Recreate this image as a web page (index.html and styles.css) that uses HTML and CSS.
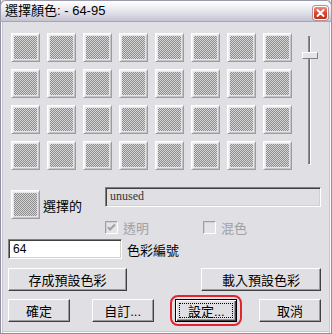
FILE: index.html
```html
<!DOCTYPE html>
<html>
<head>
<meta charset="utf-8">
<link rel="stylesheet" href="styles.css">
</head>
<body>
<div class="window">
  <div class="titlebar">
    <span class="title">選擇顏色: - 64-95</span>
    <span class="close">
      <svg width="15" height="14" viewBox="0 0 15 14"><path d="M4 3.5 L11 10.5 M11 3.5 L4 10.5" stroke="#fff" stroke-width="2.2" stroke-linecap="round"/></svg>
    </span>
  </div>
  <div class="content">
    <div class="top">
      <div class="grid">
        <div class="sw"></div><div class="sw"></div><div class="sw"></div><div class="sw"></div><div class="sw"></div><div class="sw"></div><div class="sw"></div><div class="sw"></div>
        <div class="sw"></div><div class="sw"></div><div class="sw"></div><div class="sw"></div><div class="sw"></div><div class="sw"></div><div class="sw"></div><div class="sw"></div>
        <div class="sw"></div><div class="sw"></div><div class="sw"></div><div class="sw"></div><div class="sw"></div><div class="sw"></div><div class="sw"></div><div class="sw"></div>
        <div class="sw"></div><div class="sw"></div><div class="sw"></div><div class="sw"></div><div class="sw"></div><div class="sw"></div><div class="sw"></div><div class="sw"></div>
      </div>
      <div class="slider">
        <div class="track"></div>
        <div class="thumb"></div>
      </div>
    </div>
    <div class="sel-row">
      <div class="sel-left">
        <div class="sw"></div>
        <span class="label">選擇的</span>
      </div>
      <div class="sel-right">
        <div class="field disabled">unused</div>
        <div class="checks">
          <div class="chk first">
            <span class="box"><svg width="11" height="11" viewBox="0 0 11 11"><path d="M2 5 L4 7.5 L9 2.5" stroke="#a0a0a0" stroke-width="2" fill="none"/></svg></span>
            <span class="chk-label">透明</span>
          </div>
          <div class="chk">
            <span class="box"></span>
            <span class="chk-label">混色</span>
          </div>
        </div>
      </div>
    </div>
    <div class="num-row">
      <div class="field white">64</div>
      <span class="label">色彩編號</span>
    </div>
    <div class="btn-row">
      <div class="btn wide1">存成預設色彩</div>
      <div class="btn wide2">載入預設色彩</div>
    </div>
    <div class="btn-row row2">
      <div class="btn small">確定</div>
      <div class="btn small">自訂...</div>
      <div class="btn small default"><span class="focus">設定...</span><span class="ring"></span></div>
      <div class="btn small">取消</div>
    </div>
  </div>
</div>
</body>
</html>
```
FILE: styles.css
```css
* { box-sizing: border-box; }
html, body { margin: 0; padding: 0; }
body {
  width: 332px;
  height: 334px;
  overflow: hidden;
  font-family: "Liberation Sans", "Noto Sans CJK TC", sans-serif;
  font-size: 12px;
  color: #000;
}
.window {
  width: 332px;
  height: 334px;
  background: #e0dfe3;
  border: 1px solid #8f8fa0;
  border-top: 0;
  box-shadow: inset 1px 0 #fafafc, inset 2px 0 #c8c8d4, inset -1px 0 #fafafc, inset -2px 0 #c8c8d4, inset 0 -1px #fafafc, inset 0 -2px #c8c8d4;
  display: flex;
  flex-direction: column;
}
.titlebar {
  height: 22px;
  margin: 0 -1px;
  background: linear-gradient(#ffffff 0%, #f0f0f5 30%, #d9d9e4 70%, #c3c3d0 100%);
  border-radius: 6px 6px 0 0;
  border: 1px solid #9a9aab;
  border-bottom: 1px solid #a6a6b6;
  display: flex;
  align-items: center;
  justify-content: space-between;
  padding: 0 3px 0 4px;
}
.title {
  font-size: 13px;
  color: #000;
  line-height: 14px;
}
.close {
  width: 15px;
  height: 14px;
  border-radius: 3px;
  background: linear-gradient(#f08a7c, #d6422c 55%, #c42e1c);
  border: 1px solid #fff;
  box-shadow: 0 0 0 1px #b0909a;
  display: flex;
  align-items: center;
  justify-content: center;
  margin-top: 3px;
}
.close svg { display: block; }
.content {
  flex: 1;
  padding: 10px 10px 0 7px;
  display: flex;
  flex-direction: column;
}
.top {
  display: flex;
  align-items: flex-start;
  padding-left: 3px;
}
.grid {
  display: grid;
  grid-template-columns: repeat(8, 29px);
  grid-auto-rows: 29px;
  gap: 7px;
  margin-top: 1px;
}
.sw {
  width: 29px;
  height: 29px;
  border-top: 1px solid #ffffff;
  border-left: 1px solid #ffffff;
  border-right: 1px solid #9c9ca2;
  border-bottom: 1px solid #9c9ca2;
  box-shadow: inset 1px 1px #f4f4f6, inset -1px -1px #c4c4c8;
  padding: 2px;
  background:
    conic-gradient(#8c8c8c 25%, #d6d6d6 0 50%, #8c8c8c 0 75%, #d6d6d6 0) content-box 0 0 / 2px 2px,
    #e6e6ea;
}
.slider {
  position: relative;
  width: 16px;
  height: 131px;
  margin-left: 10px;
  margin-top: 4px;
}
.track {
  width: 3px;
  height: 129px;
  margin-left: 6px;
  border-left: 1px solid #8c8c90;
  border-top: 1px solid #8c8c90;
  background: #6e6e72;
  border-right: 1px solid #ffffff;
  border-bottom: 1px solid #ffffff;
}
.thumb {
  position: absolute;
  left: 0;
  top: 16px;
  width: 16px;
  height: 7px;
  background: #e4e4e8;
  border-top: 1px solid #ffffff;
  border-left: 1px solid #ffffff;
  border-right: 1px solid #808084;
  border-bottom: 1px solid #808084;
}
.sel-row {
  display: flex;
  margin-top: 17px;
}
.sel-left {
  width: 97px;
  display: flex;
  align-items: center;
  padding-left: 3px;
  height: 33px;
}
.sel-left .sw { margin-top: 2px; }
.label {
  font-size: 13px;
  margin-left: 3px;
  margin-top: 3px;
}
.sel-right {
  display: flex;
  flex-direction: column;
  flex: 1;
}
.field {
  height: 20px;
  border-top: 1px solid #808080;
  border-left: 1px solid #808080;
  border-right: 1px solid #ffffff;
  border-bottom: 1px solid #ffffff;
  box-shadow: inset 1px 1px #404040, inset -1px -1px #d4d0c8;
  padding: 3px 0 0 4px;
  line-height: 13px;
}
.field.disabled {
  background: #e0dfe3;
  font-family: "Liberation Serif", "Noto Sans CJK TC", serif;
  font-size: 12px;
  color: #333;
  padding-top: 2px;
}
.checks {
  display: flex;
  margin-top: 14px;
}
.chk {
  display: flex;
  align-items: center;
  height: 13px;
}
.chk.first { width: 98px; }
.box {
  width: 13px;
  height: 13px;
  border-top: 1px solid #a0a0a0;
  border-left: 1px solid #a0a0a0;
  border-right: 1px solid #ffffff;
  border-bottom: 1px solid #ffffff;
  box-shadow: inset 1px 1px #d0d0d4;
  background: #e4e4e8;
  display: flex;
  align-items: center;
  justify-content: center;
}
.box svg { display: block; }
.chk-label {
  font-size: 13px;
  color: #a0a0a4;
  margin-left: 5px;
}
.num-row {
  display: flex;
  align-items: center;
  margin-top: 5px;
}
.field.white {
  width: 114px;
  background: #ffffff;
  font-size: 12px;
}
.num-row .label { margin-left: 5px; margin-top: 0; }
.btn-row {
  display: flex;
  justify-content: space-between;
  margin-top: 9px;
}
.row2 { margin-top: 8px; }
.btn {
  height: 23px;
  background: #e0dfe3;
  border-top: 1px solid #ffffff;
  border-left: 1px solid #ffffff;
  border-right: 1px solid #404040;
  border-bottom: 1px solid #404040;
  box-shadow: inset -1px -1px #9c9ca0;
  display: flex;
  align-items: center;
  justify-content: center;
  font-size: 13px;
  padding-bottom: 1px;
}
.wide1 { width: 119px; }
.wide2 { width: 120px; }
.small { width: 62px; }
.default {
  position: relative;
  border: 1px solid #000;
  box-shadow: inset 1px 1px #ffffff, inset -1px -1px #404040, inset -2px -2px #9c9ca0;
}
.focus {
  display: flex;
  align-items: center;
  justify-content: center;
  width: 54px;
  height: 15px;
  border: 1px dotted #000;
}
.ring {
  position: absolute;
  left: -6px;
  top: -5px;
  width: 72px;
  height: 31px;
  border: 2px solid #e4242c;
  border-radius: 8px;
}
```
